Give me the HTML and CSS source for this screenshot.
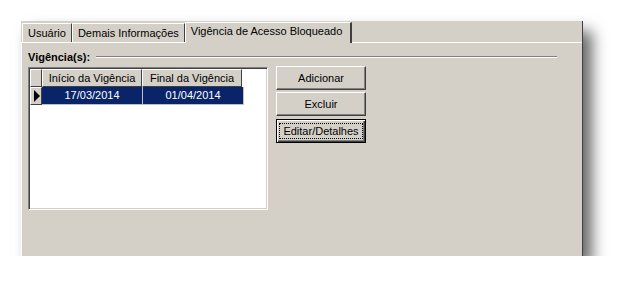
FILE: index.html
```html
<!DOCTYPE html>
<html lang="pt-BR">
<head>
  <meta charset="UTF-8">
  <title>Vigência de Acesso Bloqueado</title>
  <link rel="stylesheet" href="styles.css">
</head>
<body>
  <div class="window">
    <div class="tabs">
      <div class="tab">Usuário</div>
      <div class="tab">Demais Informações</div>
      <div class="tab active">Vigência de Acesso Bloqueado</div>
    </div>

    <div class="sheet">
      <div class="group-title">
        <span>Vigência(s):</span>
        <div class="group-line"></div>
      </div>

      <div class="group-body">
        <div class="grid">
          <div class="grid-row header">
            <div class="indicator"></div>
            <div class="cell">Início da Vigência</div>
            <div class="cell">Final da Vigência</div>
          </div>
          <div class="grid-row selected">
            <div class="indicator"><span class="arrow"></span></div>
            <div class="cell">17/03/2014</div>
            <div class="cell">01/04/2014</div>
          </div>
        </div>

        <div class="buttons">
          <button class="btn">Adicionar</button>
          <button class="btn">Excluir</button>
          <button class="btn default"><span class="focus">Editar/Detalhes</span></button>
        </div>
      </div>
    </div>
  </div>
</body>
</html>
```

FILE: styles.css
```css
body {
  margin: 0;
  background: #ffffff;
  font-family: "Liberation Sans", Arial, sans-serif;
  font-size: 11px;
  color: #000;
}
.window {
  margin: 21px 0 0 21px;
  width: 561px;
  height: 235px;
  background: #d4d0c8;
  border-right: 1px solid #404040;
  box-shadow: 9px 10px 14px rgba(0, 0, 0, 0.6);
  display: flex;
  flex-direction: column;
}
.tabs {
  display: flex;
  align-items: flex-end;
  height: 21px;
  padding-left: 1px;
}
.tab {
  height: 18px;
  line-height: 18px;
  padding: 0 5px 0 5px;
  border-top: 1px solid #fff;
  border-left: 1px solid #fff;
  border-right: 1px solid #404040;
  box-sizing: content-box;
}
.tab.active {
  height: 20px;
  line-height: 17px;
  padding: 0 8px 0 5px;
  margin-bottom: -1px;
  position: relative;
  background: #d4d0c8;
  border-right: 2px solid #404040;
}
.sheet {
  flex: 1;
  border-top: 1px solid #fff;
  border-left: 1px solid #fff;
  padding: 6px 0 0 6px;
}
.group-title {
  display: flex;
  align-items: center;
  height: 16px;
  font-weight: bold;
  padding-right: 25px;
}
.group-line {
  flex: 1;
  margin-left: 6px;
  border-top: 1px solid #808080;
  border-bottom: 1px solid #fff;
}
.group-body {
  display: flex;
  margin-top: 2px;
}
.grid {
  width: 236px;
  height: 139px;
  background: #fff;
  border-top: 1px solid #808080;
  border-left: 1px solid #808080;
  border-right: 1px solid #fff;
  border-bottom: 1px solid #fff;
  box-shadow: inset 1px 1px 0 #404040, inset -1px -1px 0 #d4d0c8;
  padding: 1px;
}
.grid-row {
  display: flex;
  height: 18px;
}
.indicator {
  width: 10px;
  background: #d4d0c8;
  border-top: 1px solid #fff;
  border-left: 1px solid #fff;
  border-right: 1px solid #404040;
  border-bottom: 1px solid #404040;
  display: flex;
  align-items: center;
  justify-content: center;
}
.arrow {
  width: 0;
  height: 0;
  border-top: 6px solid transparent;
  border-bottom: 6px solid transparent;
  border-left: 6px solid #000;
  margin-left: 1px;
}
.cell {
  width: 98px;
  text-align: center;
  line-height: 18px;
}
.header .cell {
  background: #d4d0c8;
  border-top: 1px solid #fff;
  border-left: 1px solid #fff;
  border-right: 1px solid #404040;
  border-bottom: 1px solid #404040;
  line-height: 16px;
}
.selected .cell {
  background: #0a246a;
  color: #fff;
  width: 100px;
  border-right: 1px solid #c0c0c0;
  border-bottom: 1px solid #c0c0c0;
  line-height: 17px;
}
.buttons {
  display: flex;
  flex-direction: column;
  gap: 2px;
  margin: -1px 0 0 8px;
}
.btn {
  width: 90px;
  height: 24px;
  padding: 0;
  font: inherit;
  color: #000;
  background: #d4d0c8;
  border-top: 1px solid #fff;
  border-left: 1px solid #fff;
  border-right: 1px solid #404040;
  border-bottom: 1px solid #404040;
  box-shadow: inset -1px -1px 0 #808080;
}
.btn.default {
  margin-top: 1px;
  border: 1px solid #000;
  box-shadow: inset 1px 1px 0 #fff, inset -1px -1px 0 #404040, inset -2px -2px 0 #808080;
}
.focus {
  display: inline-block;
  padding: 1px 3px;
  border: 1px dotted #000;
}
```
